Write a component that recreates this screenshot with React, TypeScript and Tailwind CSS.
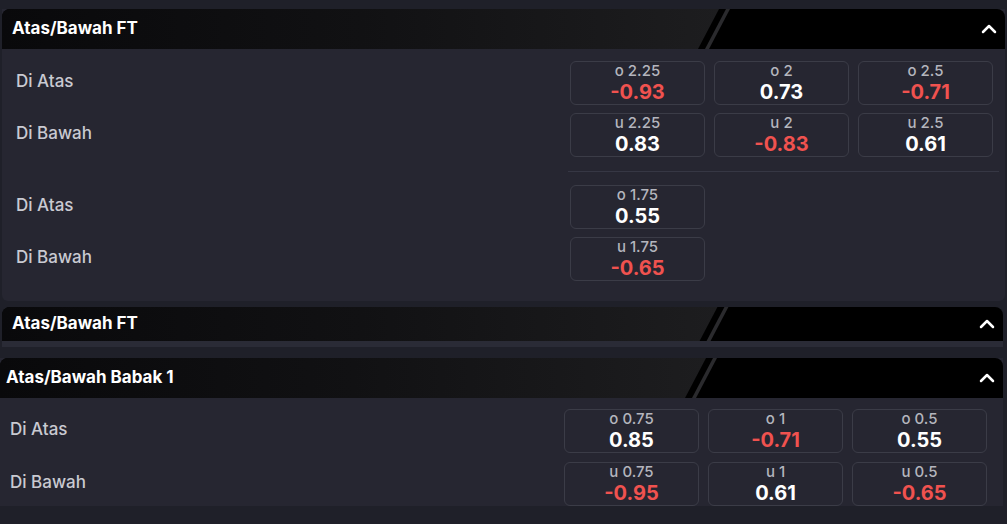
import { ChevronUp } from "lucide-react";

type Odd = { line: string; value: string };

const red = (v: string) => v.startsWith("-");

function OddBox({ line, value }: Odd) {
  return (
    <div className="flex h-[44px] w-[135px] flex-col items-center justify-center rounded-[6px] border border-[#3b3c47]">
      <span className="block text-[15px] font-medium leading-[18px] text-[#b4b5bd]">{line}</span>
      <span
        className={`block text-[20px] font-bold leading-[24px] ${red(value) ? "text-[#f0524f]" : "text-white"}`}
      >
        {value}
      </span>
    </div>
  );
}

function Header({ title, slashAt = 717, pad = "pl-[12px]" }: { title: string; slashAt?: number; pad?: string }) {
  return (
    <div className="relative flex h-[40px] items-center overflow-hidden rounded-t-[8px] bg-black">
      <svg className="absolute left-0 top-0 h-[40px] w-[760px]" viewBox="0 0 760 40" preserveAspectRatio="none">
        <defs>
          <linearGradient id={`g-${slashAt}`} x1="0" x2="1" y1="0" y2="0">
            <stop offset="0" stopColor="#09090b" />
            <stop offset="0.5" stopColor="#111113" />
            <stop offset="1" stopColor="#1d1d1f" />
          </linearGradient>
        </defs>
        <polygon points={`0,0 ${slashAt},0 ${slashAt - 21},40 0,40`} fill={`url(#g-${slashAt})`} />
        <polygon
          points={`${slashAt + 7},0 ${slashAt + 11},0 ${slashAt - 10},40 ${slashAt - 14},40`}
          fill="#2a2a2d"
        />
      </svg>
      <span className={`relative flex-1 text-[17px] font-bold text-white ${pad}`}>{title}</span>
      <ChevronUp className="relative mr-[4px] text-white" size={24} strokeWidth={2.5} />
    </div>
  );
}

function Row({ label, odds }: { label: string; odds: Odd[] }) {
  return (
    <div className="flex items-center">
      <span className="mb-[3px] flex-1 text-[17px] font-medium text-[#c9cad1]">{label}</span>
      <div className="flex w-[423px] gap-[9px]">
        {odds.map((o, i) => (
          <OddBox key={i} {...o} />
        ))}
      </div>
    </div>
  );
}

export default function App() {
  return (
    <div
      className="h-[524px] w-[1007px] overflow-hidden bg-[#1f2029] pt-[9px]"
      style={{ fontFamily: "Inter, 'Noto Sans', sans-serif" }}
    >
      {/* panel 1 */}
      <div className="ml-[2px] mr-[2px] rounded-b-[6px] bg-[#262631]">
        <Header title="Atas/Bawah FT" pad="pl-[10px]" />
        <div className="pl-[14px] pr-[12px] pt-[12px] pb-[20px]">
          <div className="flex flex-col gap-[8px]">
            <Row
              label="Di Atas"
              odds={[
                { line: "o 2.25", value: "-0.93" },
                { line: "o 2", value: "0.73" },
                { line: "o 2.5", value: "-0.71" },
              ]}
            />
            <Row
              label="Di Bawah"
              odds={[
                { line: "u 2.25", value: "0.83" },
                { line: "u 2", value: "-0.83" },
                { line: "u 2.5", value: "0.61" },
              ]}
            />
          </div>
          <div className="ml-[552px] mr-[-6px] mt-[14px] mb-[13px] h-px bg-[#363744]" />
          <div className="flex flex-col gap-[8px]">
            <Row label="Di Atas" odds={[{ line: "o 1.75", value: "0.55" }]} />
            <Row label="Di Bawah" odds={[{ line: "u 1.75", value: "-0.65" }]} />
          </div>
        </div>
      </div>

      {/* panel 2 collapsed */}
      <div className="ml-[2px] mr-[4px] mt-[6px]">
        <div className="h-[34px] overflow-hidden rounded-t-[8px]">
          <div className="-mt-[3px]">
            <Header title="Atas/Bawah FT" pad="pl-[10px]" />
          </div>
        </div>
        <div className="h-[6px] bg-[#2a2b36]" />
      </div>

      {/* panel 3 */}
      <div className="mr-[4px] mt-[11px] bg-[#262631]">
        <Header title="Atas/Bawah Babak 1" slashAt={706} pad="pl-[6px]" />
        <div className="pl-[10px] pr-[16px] pt-[11px]">
          <div className="flex flex-col gap-[9px]">
            <Row
              label="Di Atas"
              odds={[
                { line: "o 0.75", value: "0.85" },
                { line: "o 1", value: "-0.71" },
                { line: "o 0.5", value: "0.55" },
              ]}
            />
            <Row
              label="Di Bawah"
              odds={[
                { line: "u 0.75", value: "-0.95" },
                { line: "u 1", value: "0.61" },
                { line: "u 0.5", value: "-0.65" },
              ]}
            />
          </div>
        </div>
      </div>
    </div>
  );
}
